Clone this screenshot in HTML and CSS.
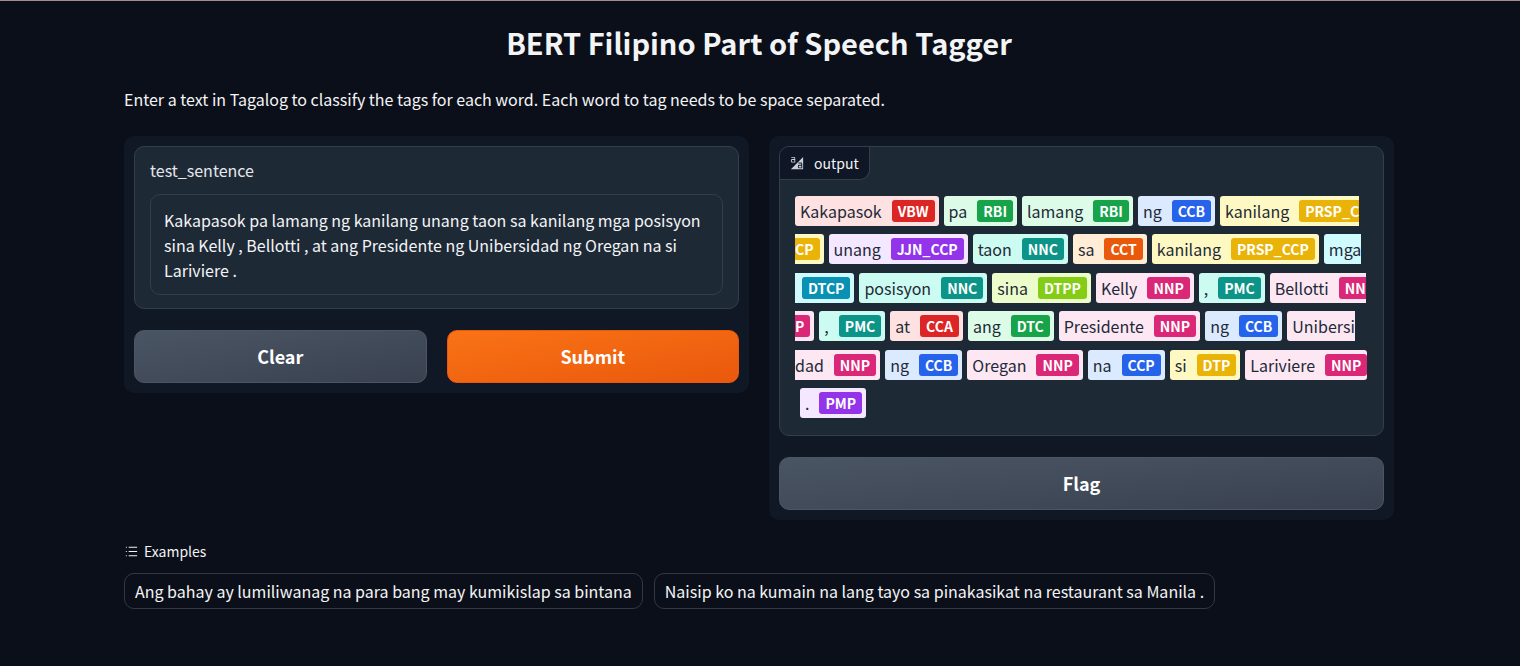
FILE: index.html
```html
<!DOCTYPE html>
<html lang="en">
<head>
<meta charset="utf-8">
<meta name="viewport" content="width=device-width, initial-scale=1">
<title>BERT Filipino Part of Speech Tagger</title>
<link rel="stylesheet" href="styles.css">
</head>
<body>
<main class="container">
  <h1 class="title">BERT Filipino Part of Speech Tagger</h1>
  <p class="description">Enter a text in Tagalog to classify the tags for each word. Each word to tag needs to be space separated.</p>

  <div class="columns">
    <section class="panel">
      <div class="card field">
        <label class="field-label" for="sentence">test_sentence</label>
        <textarea class="field-input" id="sentence" rows="3" spellcheck="false">Kakapasok pa lamang ng kanilang unang taon sa kanilang mga posisyon sina Kelly , Bellotti , at ang Presidente ng Unibersidad ng Oregan na si Lariviere .</textarea>
      </div>
      <div class="actions">
        <button class="button secondary" type="button">Clear</button>
        <button class="button primary" type="button">Submit</button>
      </div>
    </section>

    <section class="panel">
      <div class="card output">
        <h2 class="output-label">
          <svg class="output-icon" viewBox="0 0 32 32" aria-hidden="true"><path fill="currentColor" d="M12 15H5a3 3 0 0 1-3-3v-2a3 3 0 0 1 3-3h5V5a1 1 0 0 0-1-1H3V2h6a3 3 0 0 1 3 3zM5 9a1 1 0 0 0-1 1v2a1 1 0 0 0 1 1h5V9zm15 14v2a1 1 0 0 0 1 1h5v-4h-5a1 1 0 0 0-1 1z"/><path fill="currentColor" d="M2 30h28V2Zm26-2h-7a3 3 0 0 1-3-3v-2a3 3 0 0 1 3-3h5v-2a1 1 0 0 0-1-1h-6v-2h6a3 3 0 0 1 3 3Z"/></svg>
          output
        </h2>
        <div class="tokens">
          <div class="line">
            <span class="token red">Kakapasok<b class="tag">VBW</b></span>
            <span class="token green">pa<b class="tag">RBI</b></span>
            <span class="token green">lamang<b class="tag">RBI</b></span>
            <span class="token blue">ng<b class="tag">CCB</b></span>
            <span class="token yellow open-end">kanilang<b class="tag">PRSP_C</b></span>
          </div>
          <div class="line">
            <span class="token yellow open-start"><b class="tag tag-rest">CP</b></span>
            <span class="token purple">unang<b class="tag">JJN_CCP</b></span>
            <span class="token teal">taon<b class="tag">NNC</b></span>
            <span class="token orange">sa<b class="tag">CCT</b></span>
            <span class="token yellow">kanilang<b class="tag">PRSP_CCP</b></span>
            <span class="token cyan open-end">mga</span>
          </div>
          <div class="line">
            <span class="token cyan tag-only"><b class="tag">DTCP</b></span>
            <span class="token teal">posisyon<b class="tag">NNC</b></span>
            <span class="token lime">sina<b class="tag">DTPP</b></span>
            <span class="token pink">Kelly<b class="tag">NNP</b></span>
            <span class="token teal">,<b class="tag">PMC</b></span>
            <span class="token pink open-end">Bellotti<b class="tag">NN</b></span>
          </div>
          <div class="line">
            <span class="token pink open-start"><b class="tag tag-rest">P</b></span>
            <span class="token teal">,<b class="tag">PMC</b></span>
            <span class="token red">at<b class="tag">CCA</b></span>
            <span class="token green">ang<b class="tag">DTC</b></span>
            <span class="token pink">Presidente<b class="tag">NNP</b></span>
            <span class="token blue">ng<b class="tag">CCB</b></span>
            <span class="token pink open-end">Unibersi</span>
          </div>
          <div class="line">
            <span class="token pink open-start">dad<b class="tag">NNP</b></span>
            <span class="token blue">ng<b class="tag">CCB</b></span>
            <span class="token pink">Oregan<b class="tag">NNP</b></span>
            <span class="token blue">na<b class="tag">CCP</b></span>
            <span class="token yellow">si<b class="tag">DTP</b></span>
            <span class="token pink flush">Lariviere<b class="tag">NNP</b></span>
          </div>
          <div class="line indent">
            <span class="token purple">.<b class="tag">PMP</b></span>
          </div>
        </div>
      </div>
      <button class="button secondary" type="button">Flag</button>
    </section>
  </div>

  <section class="examples">
    <h2 class="examples-label">
      <svg class="examples-icon" viewBox="0 0 32 32" aria-hidden="true"><path fill="currentColor" d="M10 6h18v2H10zm0 18h18v2H10zm0-9h18v2H10zm-6 0h2v2H4zm0-9h2v2H4zm0 18h2v2H4z"/></svg>
      Examples
    </h2>
    <div class="example-list">
      <button class="example" type="button">Ang bahay ay lumiliwanag na para bang may kumikislap sa bintana</button>
      <button class="example" type="button">Naisip ko na kumain na lang tayo sa pinakasikat na restaurant sa Manila .</button>
    </div>
  </section>
</main>
</body>
</html>
```
FILE: styles.css
```css
* { box-sizing: border-box; }

body {
  margin: 0;
  padding-right: 2px;
  min-height: 100vh;
  border-top: 1px solid #a88b90;
  background: #0b0f19;
  color: #f3f4f6;
  font-family: "Noto Sans CJK SC", "Noto Sans", sans-serif;
  font-size: 16px;
  line-height: 25px;
}

button, textarea { font: inherit; color: inherit; }
h1, h2, p { margin: 0; }

.container {
  max-width: 1270px;
  margin: 0 auto;
  padding: 21px 0 40px;
}

.title {
  text-align: center;
  font-size: 29px;
  line-height: 40px;
  font-weight: 700;
}

.description { margin-top: 25px; }

.columns {
  display: grid;
  grid-template-columns: repeat(2, minmax(0, 1fr));
  align-items: start;
  gap: 20px;
  margin-top: 24px;
}

.panel {
  display: flex;
  flex-direction: column;
  gap: 21px;
  padding: 10px;
  border-radius: 10px;
  background: #101725;
}

.card {
  border: 1px solid #323e4c;
  border-radius: 10px;
  background: #1e2936;
}

.field {
  display: flex;
  flex-direction: column;
  gap: 11px;
  padding: 11px 15px 13px;
}

.field-label { color: #e5e7eb; }

.field-input {
  display: block;
  width: 100%;
  padding: 13px 13px 11px;
  border: 1px solid #323e4c;
  border-radius: 10px;
  background: transparent;
  resize: none;
  overflow: hidden;
}

.actions {
  display: grid;
  grid-template-columns: 1fr 1fr;
  gap: 20px;
}

.button {
  padding: 12px 20px;
  border: 1px solid #4b5563;
  border-radius: 10px;
  font-size: 18px;
  font-weight: 700;
  line-height: 27px;
  color: #ffffff;
}

.secondary { background: linear-gradient(to bottom right, #4a5563, #394150); }
.primary { border-color: #ea580c; background: linear-gradient(to bottom right, #f97316, #ea580c); }

.output { padding-bottom: 17px; overflow: hidden; }

.output-label {
  display: inline-flex;
  align-items: center;
  gap: 10px;
  padding: 4px 10px;
  border-right: 1px solid #323e4c;
  border-bottom: 1px solid #323e4c;
  border-radius: 0 0 10px 0;
  background: #0f1626;
  font-size: 14px;
  line-height: 24px;
  font-weight: 400;
}

.output-icon { width: 14px; height: 14px; color: #cbd0d8; }

.tokens {
  display: flex;
  flex-direction: column;
  justify-content: space-between;
  min-height: 222px;
  margin: 16px 13px 0 15px;
}

.line { display: flex; gap: 5px; }
.indent { padding-left: 5px; }

.token {
  display: flex;
  align-items: center;
  gap: 10px;
  padding: 0 4px 0 5px;
  border-radius: 3px;
  color: #1f2937;
  line-height: 30px;
  white-space: nowrap;
}

.tag {
  padding: 0 6px;
  border-radius: 3px;
  color: #ffffff;
  font-size: 14px;
  font-weight: 700;
  line-height: 22px;
}

.open-end { padding-right: 0; border-radius: 3px 0 0 3px; }
.open-end .tag { padding-right: 0; border-radius: 3px 0 0 3px; }
.open-start { padding-left: 0; border-radius: 0 3px 3px 0; }
.tag-rest { padding-left: 0; border-radius: 0 3px 3px 0; }
.tag-only { padding-left: 7px; border-radius: 0 3px 3px 0; }
.flush { padding-right: 0; }

.red { background: #fee2e2; }
.red .tag { background: #dc2626; }
.green { background: #dcfce7; }
.green .tag { background: #16a34a; }
.blue { background: #dbeafe; }
.blue .tag { background: #2563eb; }
.yellow { background: #fef9c3; }
.yellow .tag { background: #eab308; }
.purple { background: #f3e8ff; }
.purple .tag { background: #9333ea; }
.teal { background: #ccfbf1; }
.teal .tag { background: #0d9488; }
.orange { background: #ffedd5; }
.orange .tag { background: #ea580c; }
.cyan { background: #cffafe; }
.cyan .tag { background: #0891b2; }
.lime { background: #ecfccb; }
.lime .tag { background: #84cc16; }
.pink { background: #fce7f3; }
.pink .tag { background: #db2777; }

.examples { margin-top: 19px; }

.examples-label {
  display: flex;
  align-items: center;
  gap: 5px;
  font-size: 14px;
  font-weight: 400;
}

.examples-icon { width: 15px; height: 15px; }

.example-list {
  display: flex;
  flex-wrap: wrap;
  gap: 11px;
  margin-top: 9px;
}

.example {
  padding: 5px 10px;
  border: 1px solid #323845;
  border-radius: 10px;
  background: transparent;
  line-height: 24px;
}
```
